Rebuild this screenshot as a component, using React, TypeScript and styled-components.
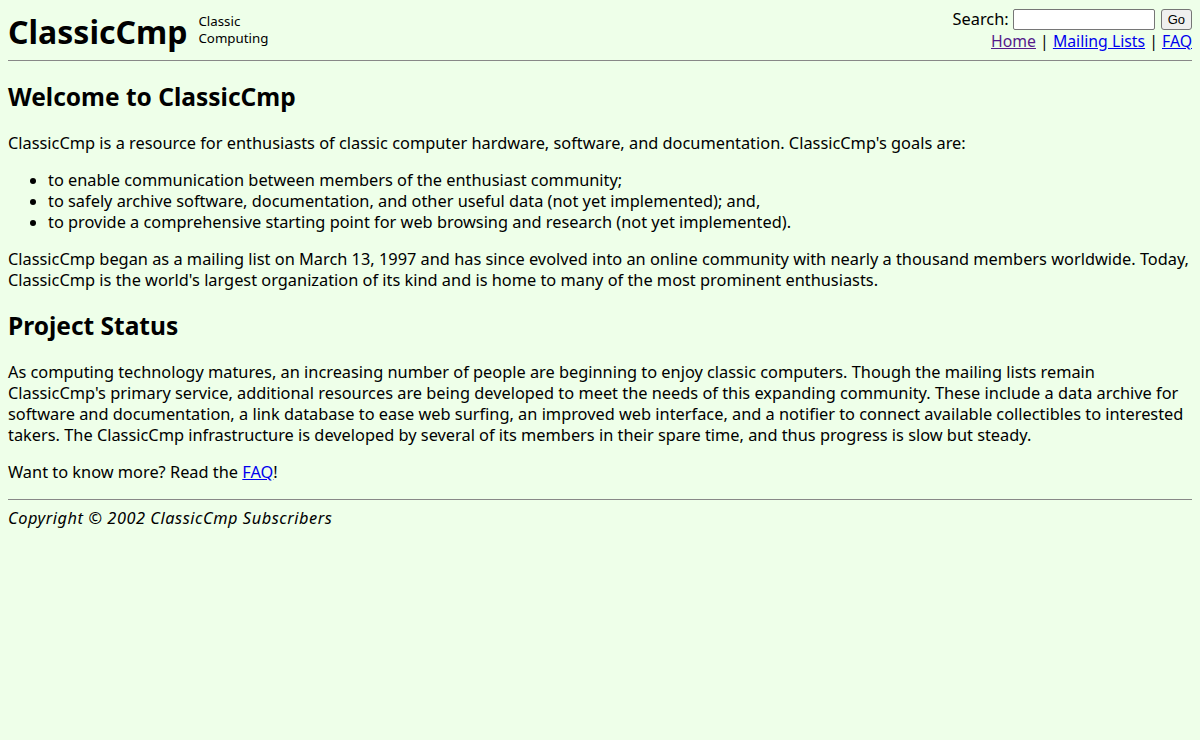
import styled, { createGlobalStyle } from "styled-components"

const Global = createGlobalStyle`
  html, body {
    margin: 0;
    padding: 0;
    background: #eeffe9;
  }
  body {
    padding: 8px;
    font-family: "Noto Sans", "Open Sans", sans-serif;
    font-size: 16.35px;
    color: #000;
  }
`

export default function App() {
  return (
    <>
      <Global />
      <Header>
        <Brand>
          <Logo>ClassicCmp</Logo>
          <Tagline>Classic<br />Computing</Tagline>
        </Brand>
        <Tools>
          <SearchForm onSubmit={(e) => e.preventDefault()}>
            <label htmlFor="q">Search:</label>
            <SearchInput id="q" type="text" />
            <GoButton type="submit">Go</GoButton>
          </SearchForm>
          <Nav>
            <Link href="#" $visited>Home</Link> | <Link href="#">Mailing Lists</Link> | <Link href="#">FAQ</Link>
          </Nav>
        </Tools>
      </Header>
      <Rule />
      <Heading>Welcome to ClassicCmp</Heading>
      <Para>
        ClassicCmp is a resource for enthusiasts of classic computer hardware, software, and documentation. ClassicCmp's goals are:
      </Para>
      <Goals>
        <li>to enable communication between members of the enthusiast community;</li>
        <li>to safely archive software, documentation, and other useful data (not yet implemented); and,</li>
        <li>to provide a comprehensive starting point for web browsing and research (not yet implemented).</li>
      </Goals>
      <Para>
        ClassicCmp began as a mailing list on March 13, 1997 and has since evolved into an online community with nearly a thousand members worldwide. Today, ClassicCmp is the world's largest organization of its kind and is home to many of the most prominent enthusiasts.
      </Para>
      <Heading>Project Status</Heading>
      <Para>
        As computing technology matures, an increasing number of people are beginning to enjoy classic computers. Though the mailing lists remain ClassicCmp's primary service, additional resources are being developed to meet the needs of this expanding community. These include a data archive for software and documentation, a link database to ease web surfing, an improved web interface, and a notifier to connect available collectibles to interested takers. The ClassicCmp infrastructure is developed by several of its members in their spare time, and thus progress is slow but steady.
      </Para>
      <Para>
        Want to know more? Read the <Link href="#">FAQ</Link>!
      </Para>
      <Rule />
      <Copyright>Copyright © 2002 ClassicCmp Subscribers</Copyright>
    </>
  )
}

const Header = styled.header`
  display: flex;
  justify-content: space-between;
  align-items: flex-start;
`

const Brand = styled.div`
  display: flex;
  align-items: center;
  gap: 11px;
  padding-top: 4px;
`

const Logo = styled.h1`
  margin: 0;
  font-size: 32px;
  font-weight: bold;
  line-height: 40px;
`

const Tagline = styled.div`
  font-size: 13.3px;
  line-height: 17px;
  margin-top: -4px;
`

const Tools = styled.div`
  display: flex;
  flex-direction: column;
  align-items: flex-end;
`

const SearchForm = styled.form`
  display: flex;
  align-items: center;
  gap: 4px;
  line-height: 22px;
`

const SearchInput = styled.input`
  width: 136px;
  height: 17px;
  padding: 1px 2px;
  border: 1px solid #767676;
  border-radius: 2px;
  background: #fff;
  font-size: 13px;
`

const GoButton = styled.button`
  margin-left: 2px;
  height: 21px;
  padding: 0 6px;
  font-family: Arial, "Liberation Sans", sans-serif;
  font-size: 13px;
  background: #efefef;
  border: 1px solid #767676;
  border-radius: 3px;
`

const Nav = styled.nav`
  font-size: 15.8px;
  line-height: 22px;
`

const Link = styled.a<{ $visited?: boolean }>`
  color: ${(p) => (p.$visited ? "#551a8b" : "#0000ee")};
  text-decoration: underline;
`

const Rule = styled.hr`
  margin: 8px 0;
  border: 0;
  border-top: 1px solid #888;
`

const Heading = styled.h2`
  font-size: 24.5px;
  font-weight: bold;
  margin: 19px 0 20px;
  line-height: 32px;

  &:first-of-type {
    margin-top: 20px;
  }
`

const Para = styled.p`
  margin: 16px 0;
  line-height: 21px;
`

const Goals = styled.ul`
  margin: 16px 0;
  padding-left: 40px;
  line-height: 21px;
`

const Copyright = styled.address`
  font-style: italic;
  letter-spacing: 0.55px;
  line-height: 21px;
`
